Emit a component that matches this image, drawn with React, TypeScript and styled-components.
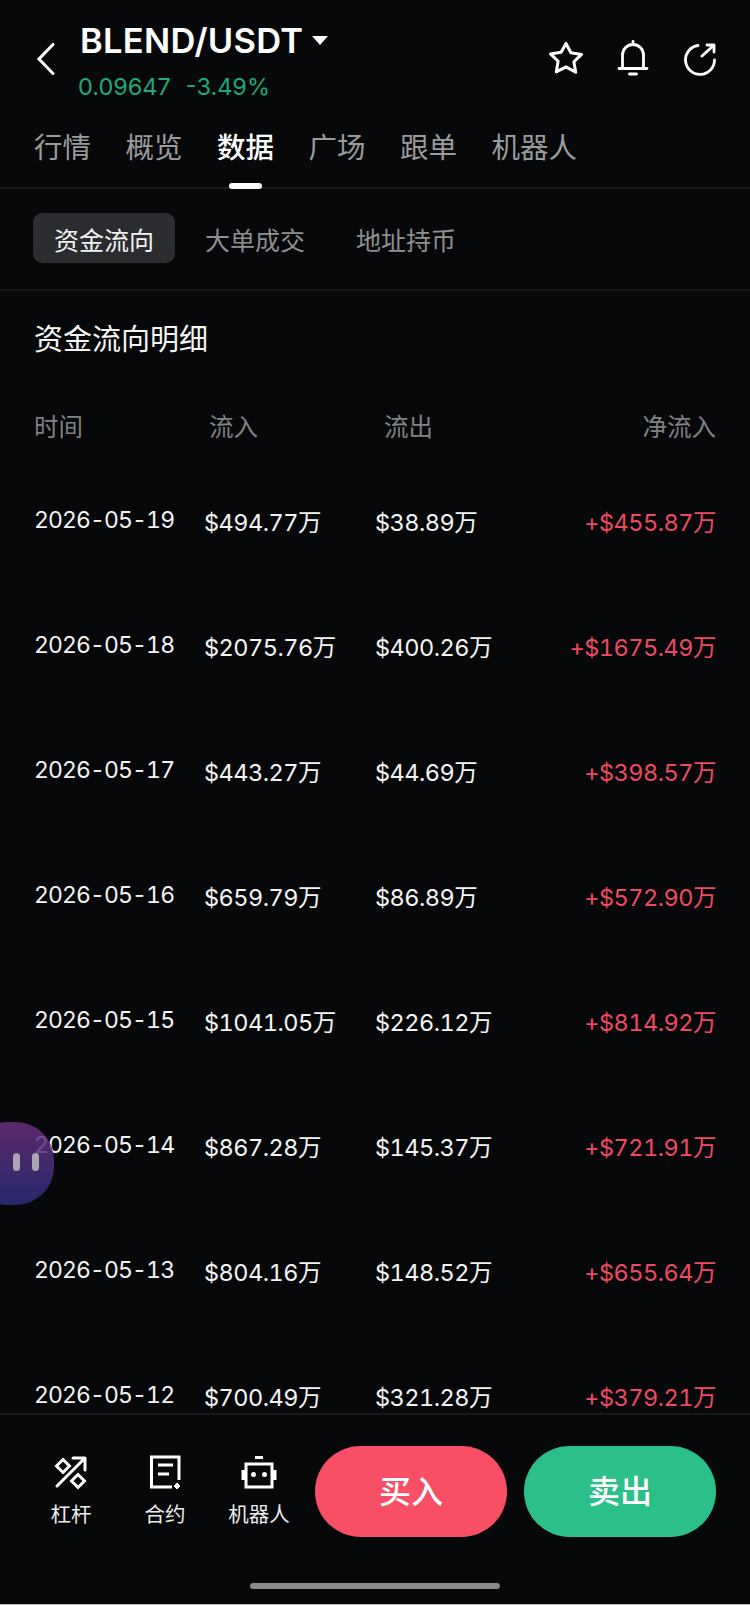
import React from 'react';
import styled, { createGlobalStyle } from 'styled-components';

const GlobalStyle = createGlobalStyle`
  html, body { margin: 0; padding: 0; background: #070809; }
  * { box-sizing: border-box; }
`;

const Page = styled.div`
  position: relative;
  width: 750px;
  height: 1605px;
  display: flex;
  flex-direction: column;
  overflow: hidden;
  background: #070809;
  color: #fff;
  font-family: Inter, "Noto Sans CJK SC", sans-serif;
`;

const Header = styled.header`
  display: flex;
  align-items: flex-start;
  height: 118px;
  padding: 20px 32px 0 36px;
`;

const Back = styled.svg`
  width: 20px;
  height: 32px;
  margin-top: 23px;
  margin-right: 24px;
`;

const TitleBlock = styled.div`
  flex: 1;
`;

const Title = styled.div`
  display: flex;
  align-items: center;
  height: 40px;
  font-size: 34.5px;
  font-weight: 600;
  letter-spacing: 0.3px;
`;

const Caret = styled.span`
  width: 0;
  height: 0;
  margin-left: 9px;
  border-left: 8px solid transparent;
  border-right: 8px solid transparent;
  border-top: 9px solid #fff;
`;

const Quote = styled.div`
  display: flex;
  gap: 15px;
  margin-top: 12px;
  margin-left: -2px;
  font-size: 23.5px;
  line-height: 30px;
  color: #1fa878;
`;

const Actions = styled.div`
  display: flex;
  gap: 31px;
  margin-top: 20px;
`;

const Tabs = styled.nav`
  position: relative;
  display: flex;
  gap: 34.5px;
  height: 71px;
  padding: 10px 0 0 34px;
  border-bottom: 2px solid #1a1b1e;
`;

const Tab = styled.div<{ $active?: boolean }>`
  position: relative;
  height: 60px;
  font-size: 28.5px;
  line-height: 40px;
  color: ${p => (p.$active ? '#fff' : '#9a9b9d')};
  font-weight: ${p => (p.$active ? 500 : 400)};

  ${p => p.$active && `
    &::after {
      content: '';
      position: absolute;
      left: 12px;
      bottom: -1px;
      width: 33px;
      height: 6px;
      border-radius: 3px;
      background: #fff;
    }
  `}
`;

const SubTabs = styled.div`
  display: flex;
  align-items: center;
  gap: 9px;
  height: 102px;
  padding: 0 33px 2px;
  border-bottom: 2px solid #141518;
`;

const SubTab = styled.div<{ $active?: boolean }>`
  height: 50px;
  padding: 0 21px;
  border-radius: 9px;
  background: ${p => (p.$active ? '#2a2c30' : 'transparent')};
  color: ${p => (p.$active ? '#f2f2f3' : '#8f9092')};
  font-size: 25px;
  line-height: 57px;
`;

const Content = styled.main`
  flex: 1;
  min-height: 0;
  overflow: hidden;
  padding: 0 34px;
`;

const SectionTitle = styled.h2`
  margin: 27px 0 0;
  font-size: 29px;
  font-weight: 400;
  line-height: 44px;
  color: #f5f5f5;
`;

const ColumnsHead = styled.div`
  display: grid;
  grid-template-columns: 175px 175px 1fr auto;
  height: 51px;
  margin-top: 45px;
  font-size: 24.5px;
  line-height: 40px;
  color: #808183;
`;

const Row = styled.div`
  display: grid;
  grid-template-columns: 170px 171px 1fr auto;
  align-items: center;
  height: 125px;
  font-size: 23.5px;
  font-variant-numeric: tabular-nums;
  letter-spacing: -0.5px;
  color: #f4f4f4;
`;

const DateCell = styled.div`
  font-size: 23px;
  letter-spacing: -0.9px;
  transform: translateY(-1px);
`;

const Net = styled.div`
  color: #ee4a61;
  text-align: right;
`;

const Bubble = styled.div`
  position: absolute;
  left: -30px;
  top: 1122px;
  display: flex;
  align-items: center;
  justify-content: flex-end;
  gap: 12px;
  width: 84px;
  height: 83px;
  padding: 0 15px 4px 0;
  border-radius: 38px;
  background: linear-gradient(180deg, rgba(111, 49, 128, 0.82) 0%, rgba(42, 43, 120, 0.9) 100%);
`;

const BubbleEye = styled.span`
  width: 7px;
  height: 18px;
  border-radius: 4px;
  background: #a9a3b4;
`;

const Footer = styled.footer`
  position: relative;
  flex: none;
  display: flex;
  align-items: flex-start;
  height: 192px;
  padding: 31px 32px 0 0;
  border-top: 2px solid #17181b;
  border-bottom: 1px solid #b8b8b8;
  background: #070809;
`;

const ToolList = styled.div`
  display: flex;
  padding-left: 24px;
  margin-right: 9px;
`;

const Tool = styled.div`
  display: flex;
  flex-direction: column;
  align-items: center;
  width: 94px;
  font-size: 20.5px;
  line-height: 28px;
  color: #ededed;
`;

const ToolIcon = styled.svg`
  width: 38px;
  height: 38px;
  margin-top: 7px;
  margin-bottom: 10px;
`;

const TradeButton = styled.div<{ $sell?: boolean }>`
  width: 192px;
  height: 91px;
  margin-left: ${p => (p.$sell ? '17px' : '0')};
  border-radius: 46px;
  background: ${p => (p.$sell ? '#2bc08a' : '#f94f66')};
  color: #fff;
  font-size: 32px;
  font-weight: 500;
  line-height: 91px;
  text-align: center;
`;

const HomeBar = styled.div`
  position: absolute;
  left: 250px;
  bottom: 15px;
  width: 250px;
  height: 6px;
  border-radius: 3px;
  background: #8a8a8a;
`;

const rows = [
  ['2026-05-19', '$494.77万', '$38.89万', '+$455.87万'],
  ['2026-05-18', '$2075.76万', '$400.26万', '+$1675.49万'],
  ['2026-05-17', '$443.27万', '$44.69万', '+$398.57万'],
  ['2026-05-16', '$659.79万', '$86.89万', '+$572.90万'],
  ['2026-05-15', '$1041.05万', '$226.12万', '+$814.92万'],
  ['2026-05-14', '$867.28万', '$145.37万', '+$721.91万'],
  ['2026-05-13', '$804.16万', '$148.52万', '+$655.64万'],
  ['2026-05-12', '$700.49万', '$321.28万', '+$379.21万'],
];

export default function App() {
  return (
    <Page>
      <GlobalStyle />
      <Header>
        <Back viewBox="0 0 20 32" fill="none" stroke="#fff" strokeWidth="3" strokeLinecap="round">
          <path d="M17 1.5 3 16l14 14.5" />
        </Back>
        <TitleBlock>
          <Title>BLEND/USDT<Caret /></Title>
          <Quote><span>0.09647</span><span>-3.49%</span></Quote>
        </TitleBlock>
        <Actions>
          <svg width="36" height="36" viewBox="0 0 36 36" fill="none" stroke="#fff" strokeWidth="3" strokeLinejoin="round">
            <path d="M18 3.5l4.9 9.3 10.6 1.6-7.6 7.4 1.8 10.5L18 26.9l-9.7 4.9 1.8-10.5-7.6-7.4 10.6-1.6z" />
          </svg>
          <svg width="36" height="36" viewBox="0 0 36 36" fill="none" stroke="#fff" strokeWidth="2.8" strokeLinecap="round">
            <path d="M4 28.5h28M7.5 28V15a10.5 10.5 0 0 1 21 0v13M18 1.5v3M14.5 34h7" />
          </svg>
          <svg width="36" height="36" viewBox="0 0 36 36" fill="none" stroke="#fff" strokeWidth="2.8" strokeLinecap="round" strokeLinejoin="round">
            <path d="M16 5.5A14.5 14.5 0 1 0 32.5 20M20 16 31.5 5.5M25 5h7v7" />
          </svg>
        </Actions>
      </Header>
      <Tabs>
        <Tab>行情</Tab>
        <Tab>概览</Tab>
        <Tab $active>数据</Tab>
        <Tab>广场</Tab>
        <Tab>跟单</Tab>
        <Tab>机器人</Tab>
      </Tabs>
      <SubTabs>
        <SubTab $active>资金流向</SubTab>
        <SubTab>大单成交</SubTab>
        <SubTab>地址持币</SubTab>
      </SubTabs>
      <Content>
        <SectionTitle>资金流向明细</SectionTitle>
        <ColumnsHead>
          <div>时间</div>
          <div>流入</div>
          <div>流出</div>
          <div>净流入</div>
        </ColumnsHead>
        {rows.map(r => (
          <Row key={r[0]}>
            <DateCell>{r[0]}</DateCell>
            <div>{r[1]}</div>
            <div>{r[2]}</div>
            <Net>{r[3]}</Net>
          </Row>
        ))}
      </Content>
      <Bubble><BubbleEye /><BubbleEye /></Bubble>
      <Footer>
        <ToolList>
          <Tool>
            <ToolIcon viewBox="0 0 38 38" fill="none" stroke="#fff" strokeWidth="3">
              <path d="M5 33 33 5M21 5h12v12" strokeLinecap="round" strokeLinejoin="round" />
              <path d="M11 6.500l6.500 6.500-6.500 6.500L4.500 13zM26 21.500l6.500 6.500-6.500 6.500-6.500-6.500z" />
            </ToolIcon>
            杠杆
          </Tool>
          <Tool>
            <ToolIcon viewBox="0 0 38 38" fill="none" stroke="#fff" strokeWidth="3">
              <path d="M26 34H5.500V4H33v23" />
              <path d="M12 12h15M12 21h11" />
              <path d="M31 30l3 3-3 3-3-3z" fill="#fff" strokeWidth="1" />
            </ToolIcon>
            合约
          </Tool>
          <Tool>
            <ToolIcon viewBox="0 0 38 38" fill="none" stroke="#fff" strokeWidth="3">
              <path d="M6 11h26v23H6zM15 4.500h8M3 17v10M35 17v10" />
              <circle cx="13.500" cy="21.500" r="2.500" fill="#fff" stroke="none" />
              <circle cx="24.500" cy="21.500" r="2.500" fill="#fff" stroke="none" />
            </ToolIcon>
            机器人
          </Tool>
        </ToolList>
        <TradeButton>买入</TradeButton>
        <TradeButton $sell>卖出</TradeButton>
        <HomeBar />
      </Footer>
    </Page>
  );
}
